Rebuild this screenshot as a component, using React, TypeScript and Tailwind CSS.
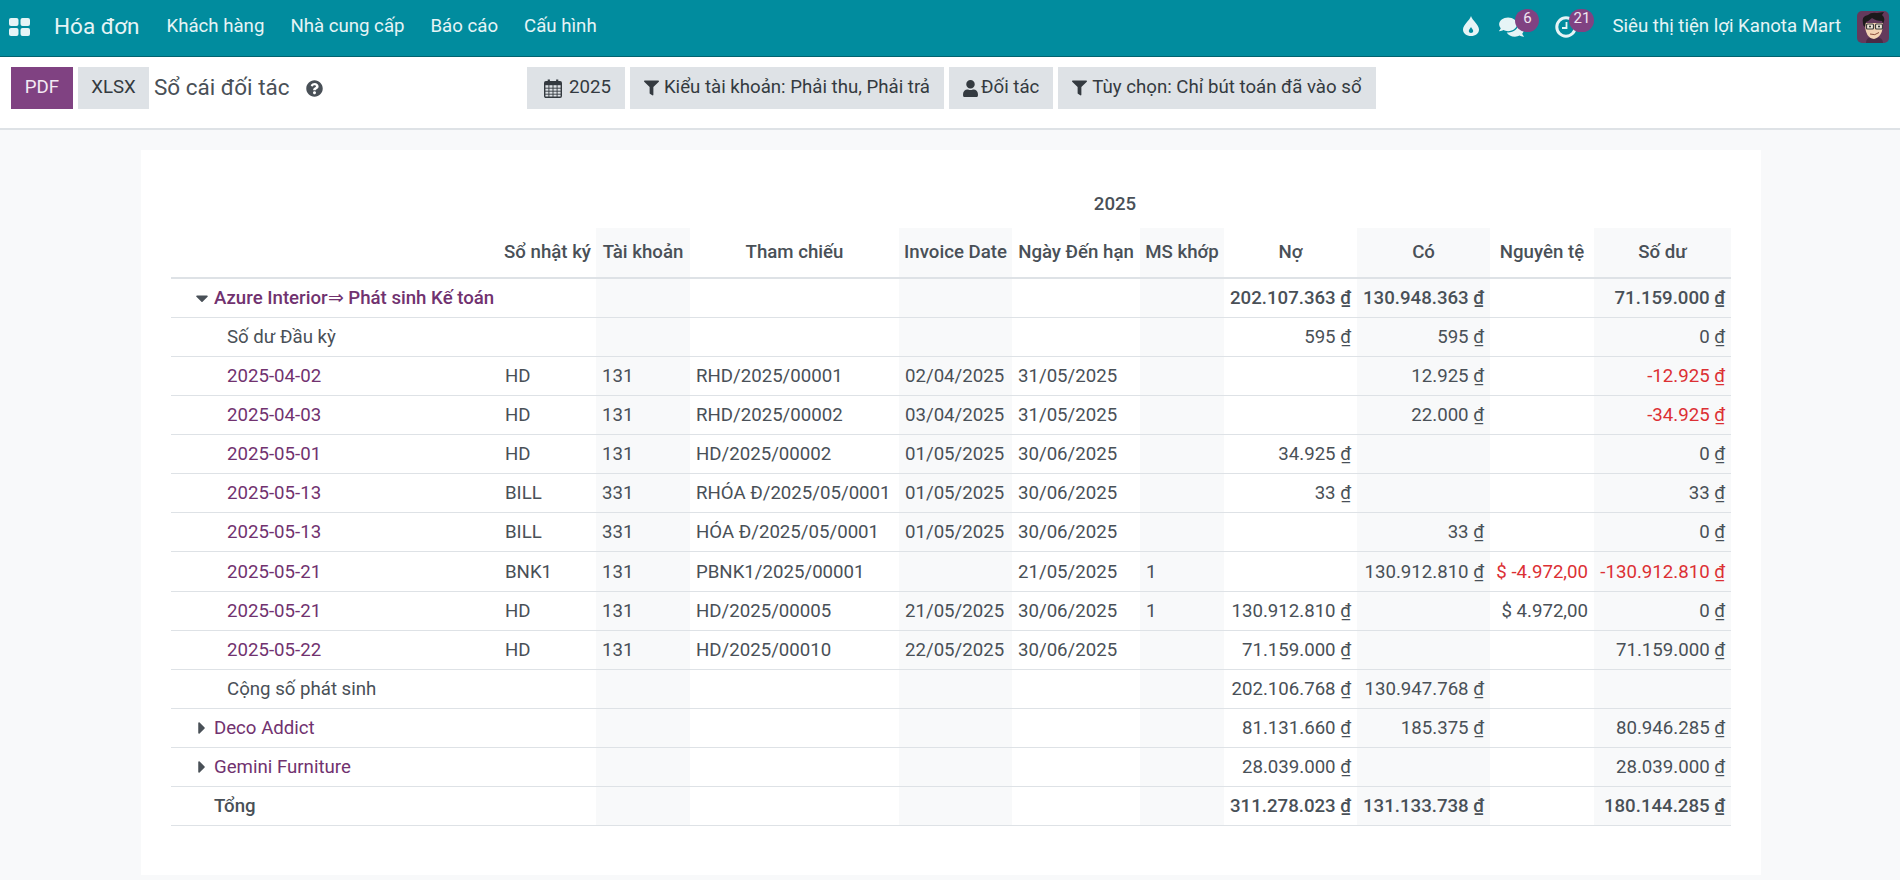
import { FaCaretDown, FaCaretRight, FaComments, FaFilter, FaQuestionCircle, FaUser } from 'react-icons/fa';

const menus = ['Khách hàng', 'Nhà cung cấp', 'Báo cáo', 'Cấu hình'];

const headers = ['Sổ nhật ký', 'Tài khoản', 'Tham chiếu', 'Invoice Date', 'Ngày Đến hạn', 'MS khớp', 'Nợ', 'Có', 'Nguyên tệ', 'Số dư'];

// label, journal, account, ref, invoice date, due date, match, debit, credit, currency, balance
type Row = {
  kind: 'group' | 'plain' | 'line' | 'closed' | 'total';
  cells: string[];
};

const rows: Row[] = [
  { kind: 'group', cells: ['Azure Interior⇒ Phát sinh Kế toán', '', '', '', '', '', '', '202.107.363 ₫', '130.948.363 ₫', '', '71.159.000 ₫'] },
  { kind: 'plain', cells: ['Số dư Đầu kỳ', '', '', '', '', '', '', '595 ₫', '595 ₫', '', '0 ₫'] },
  { kind: 'line', cells: ['2025-04-02', 'HD', '131', 'RHD/2025/00001', '02/04/2025', '31/05/2025', '', '', '12.925 ₫', '', '-12.925 ₫'] },
  { kind: 'line', cells: ['2025-04-03', 'HD', '131', 'RHD/2025/00002', '03/04/2025', '31/05/2025', '', '', '22.000 ₫', '', '-34.925 ₫'] },
  { kind: 'line', cells: ['2025-05-01', 'HD', '131', 'HD/2025/00002', '01/05/2025', '30/06/2025', '', '34.925 ₫', '', '', '0 ₫'] },
  { kind: 'line', cells: ['2025-05-13', 'BILL', '331', 'RHÓA Đ/2025/05/0001', '01/05/2025', '30/06/2025', '', '33 ₫', '', '', '33 ₫'] },
  { kind: 'line', cells: ['2025-05-13', 'BILL', '331', 'HÓA Đ/2025/05/0001', '01/05/2025', '30/06/2025', '', '', '33 ₫', '', '0 ₫'] },
  { kind: 'line', cells: ['2025-05-21', 'BNK1', '131', 'PBNK1/2025/00001', '', '21/05/2025', '1', '', '130.912.810 ₫', '$ -4.972,00', '-130.912.810 ₫'] },
  { kind: 'line', cells: ['2025-05-21', 'HD', '131', 'HD/2025/00005', '21/05/2025', '30/06/2025', '1', '130.912.810 ₫', '', '$ 4.972,00', '0 ₫'] },
  { kind: 'line', cells: ['2025-05-22', 'HD', '131', 'HD/2025/00010', '22/05/2025', '30/06/2025', '', '71.159.000 ₫', '', '', '71.159.000 ₫'] },
  { kind: 'plain', cells: ['Cộng số phát sinh', '', '', '', '', '', '', '202.106.768 ₫', '130.947.768 ₫', '', ''] },
  { kind: 'closed', cells: ['Deco Addict', '', '', '', '', '', '', '81.131.660 ₫', '185.375 ₫', '', '80.946.285 ₫'] },
  { kind: 'closed', cells: ['Gemini Furniture', '', '', '', '', '', '', '28.039.000 ₫', '', '', '28.039.000 ₫'] },
  { kind: 'total', cells: ['Tổng', '', '', '', '', '', '', '311.278.023 ₫', '131.133.738 ₫', '', '180.144.285 ₫'] },
];

const shaded = [2, 4, 6, 8, 10];

function AppsIcon() {
  return (
    <svg viewBox="0 0 21 18" className="w-[21px] h-[18px]" fill="#e6f4f6">
      <rect x="0" y="0" width="9.5" height="8" rx="2" />
      <rect x="11.5" y="0" width="9.5" height="8" rx="2" />
      <rect x="0" y="10" width="9.5" height="8" rx="2" />
      <rect x="11.5" y="10" width="9.5" height="8" rx="2" />
    </svg>
  );
}

function DropIcon() {
  return (
    <svg viewBox="0 0 16 20" className="w-[16px] h-[20px] mr-[19px] -mt-[2px]">
      <path d="M8 0 C9 4 16 9 16 13.5 C16 17.5 12.5 20 8 20 C3.5 20 0 17.5 0 13.5 C0 9 7 4 8 0 Z" fill="#e6f4f6" />
      <path d="M8 11 C8.6 12.6 10.2 13.4 10.2 15 C10.2 16.2 9.2 17 8 17 C6.8 17 5.8 16.2 5.8 15 C5.8 13.4 7.4 12.6 8 11 Z" fill="#018c9e" />
    </svg>
  );
}

function ClockIcon() {
  return (
    <svg viewBox="0 0 22 22" className="w-[22px] h-[22px] mr-[35px]" fill="none" stroke="#e6f4f6">
      <circle cx="11" cy="11" r="9.2" strokeWidth="3" />
      <path d="M11.5 6 V12 H7" strokeWidth="1.8" />
    </svg>
  );
}

function CalendarIcon() {
  return (
    <svg viewBox="0 0 18 19" className="w-[18px] h-[19px] mr-[7px] ml-[3px]" fill="none" stroke="#343a40">
      <rect x="0.7" y="2.7" width="16.6" height="15.6" rx="1.2" strokeWidth="1.4" />
      <rect x="1" y="3" width="16" height="3.2" fill="#343a40" stroke="none" />
      <path d="M4.8 0.5 V4 M13.2 0.5 V4" strokeWidth="2.2" />
      <path d="M1 9.2 H17 M1 12.2 H17 M1 15.2 H17 M4.9 6 V18 M9 6 V18 M13.1 6 V18" strokeWidth="0.9" />
    </svg>
  );
}

function Avatar() {
  return (
    <svg viewBox="0 0 32 32" className="w-[32px] h-[32px] rounded-[5px]">
      <rect width="32" height="32" fill="#643a5c" />
      <path d="M9 32 Q9 27 14 26 L20 26 Q26 27 26 32 Z" fill="#4a2b45" />
      <path d="M8 12 Q8 27 17 28 Q26 26 26 12 Z" fill="#f3d2b3" />
      <path d="M6 13 Q4 5 11 4 Q14 1 20 2 L27 1 L25 4 Q29 7 26 13 L25 10 Q19 10 15 7 Q12 10 9 11 L8 16 Q6 15 6 13 Z" fill="#1c1a1c" />
      <rect x="9.5" y="13" width="7" height="5" rx="1" fill="#efe6d8" stroke="#3a3a3a" strokeWidth="1.2" />
      <rect x="18.5" y="13" width="7" height="5" rx="1" fill="#efe6d8" stroke="#3a3a3a" strokeWidth="1.2" />
      <circle cx="13" cy="15.5" r="1" fill="#222" />
      <circle cx="22" cy="15.5" r="1" fill="#222" />
      <path d="M13 23 Q18 25 22 21.5" fill="none" stroke="#8a4b3a" strokeWidth="1" />
    </svg>
  );
}

function Badge({ text, className }: { text: string; className: string }) {
  return (
    <span className={'absolute top-[9px] h-[23px] rounded-full bg-[#804282] text-[#f1e6f1] text-[15px] leading-[19px] text-center ' + className}>
      {text}
    </span>
  );
}

function FilterButton({ icon, label }: { icon: React.ReactNode; label: string }) {
  return (
    <button className="h-[42px] px-[14px] bg-[#dee2e6] text-[#343a40] flex items-center text-[18.65px]">
      {icon}
      {label}
    </button>
  );
}

function Navbar() {
  return (
    <header className="h-[57px] shrink-0 bg-[#018c9e] border-b border-[#01636f] text-[#e6f4f6] flex items-center">
      <div className="ml-[9px] mr-[24px] -mt-[2px] h-[18px]">
        <AppsIcon />
      </div>
      <span className="text-[22.5px] mr-[27px] -mt-[2px]">Hóa đơn</span>
      <nav className="flex gap-[26px] text-[18.65px] -mt-[2px]">
        {menus.map((m) => (
          <a key={m}>{m}</a>
        ))}
      </nav>
      <div className="ml-auto flex items-center relative h-full pb-[2px]">
        <DropIcon />
        <FaComments className="w-[27px] h-[22px] mr-[30px]" />
        <ClockIcon />
        <Badge text="6" className="left-[52px] w-[24px]" />
        <Badge text="21" className="left-[106px] w-[25px]" />
        <span className="text-[18.65px] mr-[16px]">Siêu thị tiện lợi Kanota Mart</span>
        <div className="mr-[11px] h-[32px]">
          <Avatar />
        </div>
      </div>
    </header>
  );
}

function ControlPanel() {
  return (
    <div className="h-[73px] shrink-0 bg-white border-b-2 border-[#dee2e6] pt-[10px] flex items-start">
      <div className="w-[527px] flex items-center pl-[11px]">
        <button className="h-[42px] w-[62px] bg-[#804282] text-[#f3eaf3] text-[18.65px]">PDF</button>
        <button className="h-[42px] w-[71px] ml-[5px] bg-[#dee2e6] text-[#343a40] text-[18.65px]">XLSX</button>
        <h1 className="ml-[5px] text-[22.5px] text-[#495057]">Sổ cái đối tác</h1>
        <FaQuestionCircle className="ml-[16px] w-[17px] h-[17px] text-[#495057]" />
      </div>
      <div className="flex gap-[5px]">
        <FilterButton icon={<CalendarIcon />} label="2025" />
        <FilterButton icon={<FaFilter className="w-[15px] h-[16px] mr-[5px]" />} label="Kiểu tài khoản: Phải thu, Phải trả" />
        <FilterButton icon={<FaUser className="w-[15px] h-[17px] mr-[3px]" />} label="Đối tác" />
        <FilterButton icon={<FaFilter className="w-[15px] h-[16px] mr-[5px]" />} label="Tùy chọn: Chỉ bút toán đã vào sổ" />
      </div>
    </div>
  );
}

function LedgerRow({ row }: { row: Row }) {
  const bold = row.kind === 'group' || row.kind === 'total';
  const purple = row.kind === 'group' || row.kind === 'closed' || row.kind === 'line';
  return (
    <tr className={'h-[39.15px] border-b border-[#dee2e6] ' + (bold ? 'font-medium' : '')}>
      {row.cells.map((c, i) => {
        if (i === 0) {
          const indent = row.kind === 'plain' || row.kind === 'line' ? 'pl-[56px]' : 'pl-[43px]';
          return (
            <td key={i} className={'relative pt-[2px] whitespace-nowrap ' + indent + ' ' + (purple ? 'text-[#71326f]' : '')}>
              {row.kind === 'group' && <FaCaretDown className="absolute left-[21px] top-[9px] w-[20px] h-[20px] text-[#495057]" />}
              {row.kind === 'closed' && <FaCaretRight className="absolute left-[21px] top-[9px] w-[20px] h-[20px] text-[#495057]" />}
              {c}
            </td>
          );
        }
        const money = i >= 7;
        const red = money && c.includes('-');
        return (
          <td
            key={i}
            className={
              'px-[6px] pt-[2px] whitespace-nowrap ' +
              (money ? 'text-right ' : '') +
              (shaded.includes(i) ? 'bg-[#f8f9fa] ' : '') +
              (red ? 'text-[#dc3034]' : '')
            }
          >
            {c}
          </td>
        );
      })}
    </tr>
  );
}

export default function App() {
  return (
    <div className="h-screen overflow-hidden flex flex-col bg-[#f8f9fa] font-['Roboto',sans-serif]">
      <Navbar />
      <ControlPanel />
      <main className="ml-[141px] w-[1620px] mt-[20px] bg-white px-[30px] pt-[28px] pb-[49px] text-[18.65px] text-[#495057]">
        <table className="table-fixed w-[1560px] border-collapse">
          <colgroup>
            <col className="w-[328px]" />
            <col className="w-[97px]" />
            <col className="w-[94px]" />
            <col className="w-[209px]" />
            <col className="w-[113px]" />
            <col className="w-[128px]" />
            <col className="w-[84px]" />
            <col className="w-[133px]" />
            <col className="w-[133px]" />
            <col className="w-[104px]" />
            <col className="w-[137px]" />
          </colgroup>
          <thead>
            <tr className="h-[50px]">
              <th></th>
              <th colSpan={10} className="font-medium text-center pt-[4px]">2025</th>
            </tr>
            <tr className="h-[50px] border-b-2 border-[#dee2e6]">
              <th></th>
              {headers.map((h, i) => (
                <th key={h} className={'font-medium text-center whitespace-nowrap pt-[1px] ' + (shaded.includes(i + 1) ? 'bg-[#f8f9fa]' : '')}>
                  {h}
                </th>
              ))}
            </tr>
          </thead>
          <tbody>
            {rows.map((r, i) => (
              <LedgerRow key={i} row={r} />
            ))}
          </tbody>
        </table>
      </main>
    </div>
  );
}
